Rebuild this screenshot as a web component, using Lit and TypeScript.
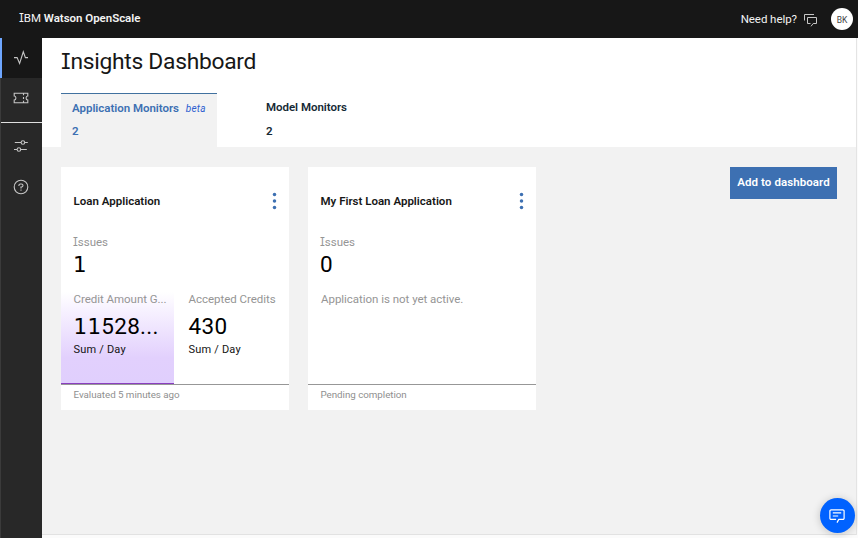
import { LitElement, html, css, svg, nothing } from "lit";
import { customElement, property } from "lit/decorators.js";

interface Metric {
  label: string;
  lead: string;
  value: string;
  unit: string;
  highlighted: boolean;
}

interface Application {
  name: string;
  issues: string;
  metrics: Metric[];
  footer: string;
}

const applications: Application[] = [
  {
    name: "Loan Application",
    issues: "1",
    metrics: [
      { label: "Credit Amount G...", lead: "11", value: "528...", unit: "Sum / Day", highlighted: true },
      { label: "Accepted Credits", lead: "", value: "430", unit: "Sum / Day", highlighted: false },
    ],
    footer: "Evaluated 5 minutes ago",
  },
  {
    name: "My First Loan Application",
    issues: "0",
    metrics: [],
    footer: "Pending completion",
  },
];

// Roboto has no serifed capital I, so that letter is set in Inter's alternate form.
const serifI = html`<span class="cap-i">I</span>`;

const shared = css`
  * {
    box-sizing: border-box;
  }
  .cap-i {
    font-family: Inter, sans-serif;
    font-size: 0.96em;
    font-feature-settings: "cv08" 1, "ss02" 1;
    line-height: 1;
  }
  .foot-one {
    font-family: "DejaVu Sans", sans-serif;
    font-size: 0.95em;
    line-height: 1;
  }
`;

@customElement("application-card")
export class ApplicationCard extends LitElement {
  @property({ attribute: false }) app!: Application;

  static styles = [
    shared,
    css`
      :host {
        display: flex;
        flex-direction: column;
        width: 228px;
        height: 243px;
        background: #fff;
        color: #121212;
      }
      .head {
        display: flex;
        justify-content: space-between;
        padding: 25px 12px 0 12.5px;
        height: 68px;
      }
      .name {
        font-size: 11.5px;
        font-weight: 600;
        line-height: 18px;
        letter-spacing: 0;
        white-space: nowrap;
        color: #171717;
      }
      .menu {
        display: block;
        width: 5px;
        height: 18px;
      }
      .issues {
        height: 57px;
        padding-left: 12px;
      }
      .label {
        height: 15px;
        font-size: 11.5px;
        line-height: 15px;
        letter-spacing: -0.03px;
        white-space: nowrap;
        color: #959595;
      }
      .number {
        height: 30px;
        font-size: 22.5px;
        line-height: 29px;
        letter-spacing: 0.3px;
        white-space: nowrap;
        color: #000;
      }
      .body {
        flex: 1;
        display: flex;
        border-bottom: 1px solid #979797;
      }
      .metric {
        flex: none;
        width: 113px;
        padding-left: 12.5px;
        height: 92px;
      }
      .metric.highlighted {
        padding-left: 12.5px;
        margin-right: 2px;
        border-bottom: 1px solid #8a3fc0;
        background: linear-gradient(#fff 0, #f8f3ff 16px, #e2d0fd 66px, #e0cffd 100%);
      }
      .metric .number {
        margin-top: 5px;
      }
      .unit {
        font-size: 11px;
        line-height: 15px;
        letter-spacing: 0.2px;
      }
      .inactive {
        padding-left: 13px;
      }
      .foot {
        height: 25px;
        padding: 3px 12.5px 0;
        font-size: 9.8px;
        line-height: 14px;
        letter-spacing: -0.04px;
        color: #8f8f8f;
      }
    `,
  ];

  private renderMetric(metric: Metric) {
    return html`
      <div class="metric ${metric.highlighted ? "highlighted" : ""}">
        <div class="label">${metric.label}</div>
        <div class="number">${metric.lead ? html`<span class="foot-one">${metric.lead}</span>` : nothing}${metric.value}</div>
        <div class="unit">${metric.unit}</div>
      </div>
    `;
  }

  render() {
    const { name, issues, metrics, footer } = this.app;
    return html`
      <div class="head">
        <div class="name">${name}</div>
        <svg class="menu" viewBox="0 0 5 18" fill="#3d70b2">
          <circle cx="2.5" cy="2.5" r="1.75" />
          <circle cx="2.5" cy="9" r="1.75" />
          <circle cx="2.5" cy="15.5" r="1.75" />
        </svg>
      </div>
      <div class="issues">
        <div class="label">${serifI}ssues</div>
        <div class="number">${issues === "1" ? html`<span class="foot-one">1</span>` : issues}</div>
      </div>
      <div class="body">
        ${metrics.length
          ? metrics.map((m) => this.renderMetric(m))
          : html`<div class="label inactive">Application is not yet active.</div>`}
      </div>
      <div class="foot">${footer}</div>
    `;
  }
}

@customElement("app-root")
export class AppRoot extends LitElement {
  static styles = [
    shared,
    css`
      :host {
        display: flex;
        flex-direction: column;
        position: relative;
        width: 858px;
        height: 538px;
        overflow: hidden;
        font-family: Roboto, "Liberation Sans", sans-serif;
        background: #fbfbfb;
      }
      .topbar {
        display: flex;
        align-items: center;
        height: 38px;
        padding: 0 5px 0 19px;
        background: #171717;
        color: #f3f3f3;
      }
      .brand {
        flex: 1;
        padding-bottom: 2px;
        font-size: 11.5px;
        line-height: 16px;
        letter-spacing: -0.03px;
      }
      .brand b {
        font-weight: 600;
      }
      .help {
        padding-bottom: 1px;
        font-size: 11.5px;
        line-height: 16px;
        letter-spacing: -0.05px;
        margin-right: 7px;
      }
      .chat {
        width: 13px;
        height: 13px;
        margin: 2px 14px 0 0;
      }
      .avatar {
        display: grid;
        place-items: center;
        width: 22px;
        height: 22px;
        padding-top: 1px;
        border-radius: 50%;
        background: #fff;
        color: #444;
        font-size: 8.5px;
        letter-spacing: 0;
      }
      .shell {
        display: flex;
        flex: 1;
      }
      .rail {
        width: 42px;
        background: #282828;
        border-left: 1px solid #3b3b3b;
      }
      .item {
        display: flex;
        align-items: center;
        justify-content: center;
        height: 40px;
        padding-right: 1px;
      }
      .item svg {
        width: 16px;
        height: 16px;
        fill: none;
        stroke: #c6c6c6;
        stroke-width: 1.1;
      }
      .item.active {
        margin-left: -1px;
        padding-right: 2px;
        border-left: 2px solid #6ea6ff;
        background: #171717;
      }
      .item.last {
        height: 45px;
        padding-bottom: 4px;
        border-bottom: 1px solid #e0e0e0;
      }
      .item.settings {
        height: 46px;
      }
      .item.question {
        height: 36px;
      }
      .page {
        display: flex;
        flex-direction: column;
        width: 815px;
        height: 497px;
        border-right: 1px solid #e4e4e4;
        border-bottom: 1px solid #e2e2e2;
        background: #f2f2f2;
      }
      .hero {
        height: 109px;
        padding: 8px 0 0 19px;
        background: #fff;
      }
      h1 {
        margin: 0;
        height: 47px;
        font-size: 22.8px;
        font-weight: 400;
        line-height: 31px;
        letter-spacing: -0.27px;
        color: #171717;
      }
      .tabs {
        display: flex;
        gap: 38px;
      }
      .tab {
        width: 156px;
        height: 54px;
        padding: 6px 11px 0;
        border-top: 1px solid transparent;
        font-size: 11.5px;
        font-weight: 600;
        line-height: 14px;
        letter-spacing: -0.03px;
        white-space: nowrap;
        color: #152935;
      }
      .tab.selected {
        padding-top: 7px;
        border-top-color: #41719f;
        background: #f2f2f2;
        color: #3d70b2;
      }
      .beta {
        margin-left: 4px;
        font-size: 10px;
        font-weight: 400;
        font-style: italic;
        line-height: 1;
        letter-spacing: 0.2px;
        color: #2d60d0;
      }
      .count {
        margin-top: 10px;
      }
      .selected .count {
        margin-top: 9px;
      }
      .content {
        display: flex;
        align-items: flex-start;
        gap: 19px;
        padding: 20px 19px;
      }
      .add {
        margin-left: auto;
        width: 107px;
        height: 32px;
        padding: 0 0 3px;
        border: 0;
        background: #3d70b2;
        color: #fff;
        font: 600 11.5px Roboto, "Liberation Sans", sans-serif;
        letter-spacing: 0.08px;
        white-space: nowrap;
      }
      .assist {
        position: absolute;
        right: 3px;
        bottom: 5px;
        display: grid;
        place-items: center;
        width: 35px;
        height: 35px;
        padding-right: 1px;
        border-radius: 50%;
        background: #0062ff;
        box-shadow: 0 1px 8px rgba(0, 0, 0, 0.2);
      }
      .assist svg {
        width: 16px;
        height: 16px;
      }
    `,
  ];

  private readonly icons = {
    activity: svg`<path d="M1 7.6h3.100l2.500 5.900L10.300 1.800 12.400 7.600H15" />`,
    ticket: svg`<path d="M1.200 3.200h13.600V6c-2.300 0-2.300 4 0 4v2.800H1.200V10c2.300 0 2.300-4 0-4zM10.500 3.200v2M10.500 6.900v2.200M10.500 10.800v2" />`,
    sliders: svg`<path d="M1.800 4.500h6.200M11.800 4.500h3M1 11.500h3M7.800 11.500h6" /><circle cx="9.900" cy="4.500" r="1.800" /><circle cx="5.900" cy="11.500" r="1.800" />`,
    question: svg`<circle cx="8" cy="8" r="6.800" /><path d="M5.900 6.900V6.500c0-.9.700-1.500 1.500-1.500h1c.9 0 1.600.6 1.600 1.500S9.300 8 8.400 8H8v1.400M8 10.600v1.200" />`,
  };

  private icon(shape: unknown) {
    return html`<svg viewBox="0 0 16 16">${shape}</svg>`;
  }

  render() {
    return html`
      <header class="topbar">
        <div class="brand">${serifI}BM <b>Watson OpenScale</b></div>
        <div class="help">Need help?</div>
        <svg class="chat" viewBox="0 0 13 13" fill="none" stroke="#c6c6c6">
          <path d="M.5 6.500V.5h9.500M3.500 3.500h9v6H9.200L7 12.300M3.500 3.500v6h3" />
        </svg>
        <div class="avatar">BK</div>
      </header>
      <div class="shell">
        <nav class="rail">
          <div class="item active">${this.icon(this.icons.activity)}</div>
          <div class="item last">${this.icon(this.icons.ticket)}</div>
          <div class="item settings">${this.icon(this.icons.sliders)}</div>
          <div class="item question">${this.icon(this.icons.question)}</div>
        </nav>
        <main class="page">
          <section class="hero">
            <h1>${serifI}nsights Dashboard</h1>
            <div class="tabs">
              <div class="tab selected">
                <div>Application Monitors <span class="beta">beta</span></div>
                <div class="count">2</div>
              </div>
              <div class="tab">
                <div>Model Monitors</div>
                <div class="count">2</div>
              </div>
            </div>
          </section>
          <section class="content">
            ${applications.map((app) => html`<application-card .app=${app}></application-card>`)}
            <button class="add">Add to dashboard</button>
          </section>
        </main>
      </div>
      <div class="assist">
        <svg viewBox="0 0 16 16" fill="none" stroke="#fff" stroke-width="1.2" stroke-linejoin="round">
          <path d="M8 14.600l1.800-3.200h4.100a1.200 1.200 0 0 0 1.200-1.200V3a1.200 1.200 0 0 0-1.200-1.200H2.100A1.200 1.200 0 0 0 .9 3v7.200a1.200 1.200 0 0 0 1.200 1.200h5M3.800 4.900h8.400M3.800 8h5.400" />
        </svg>
      </div>
    `;
  }
}
